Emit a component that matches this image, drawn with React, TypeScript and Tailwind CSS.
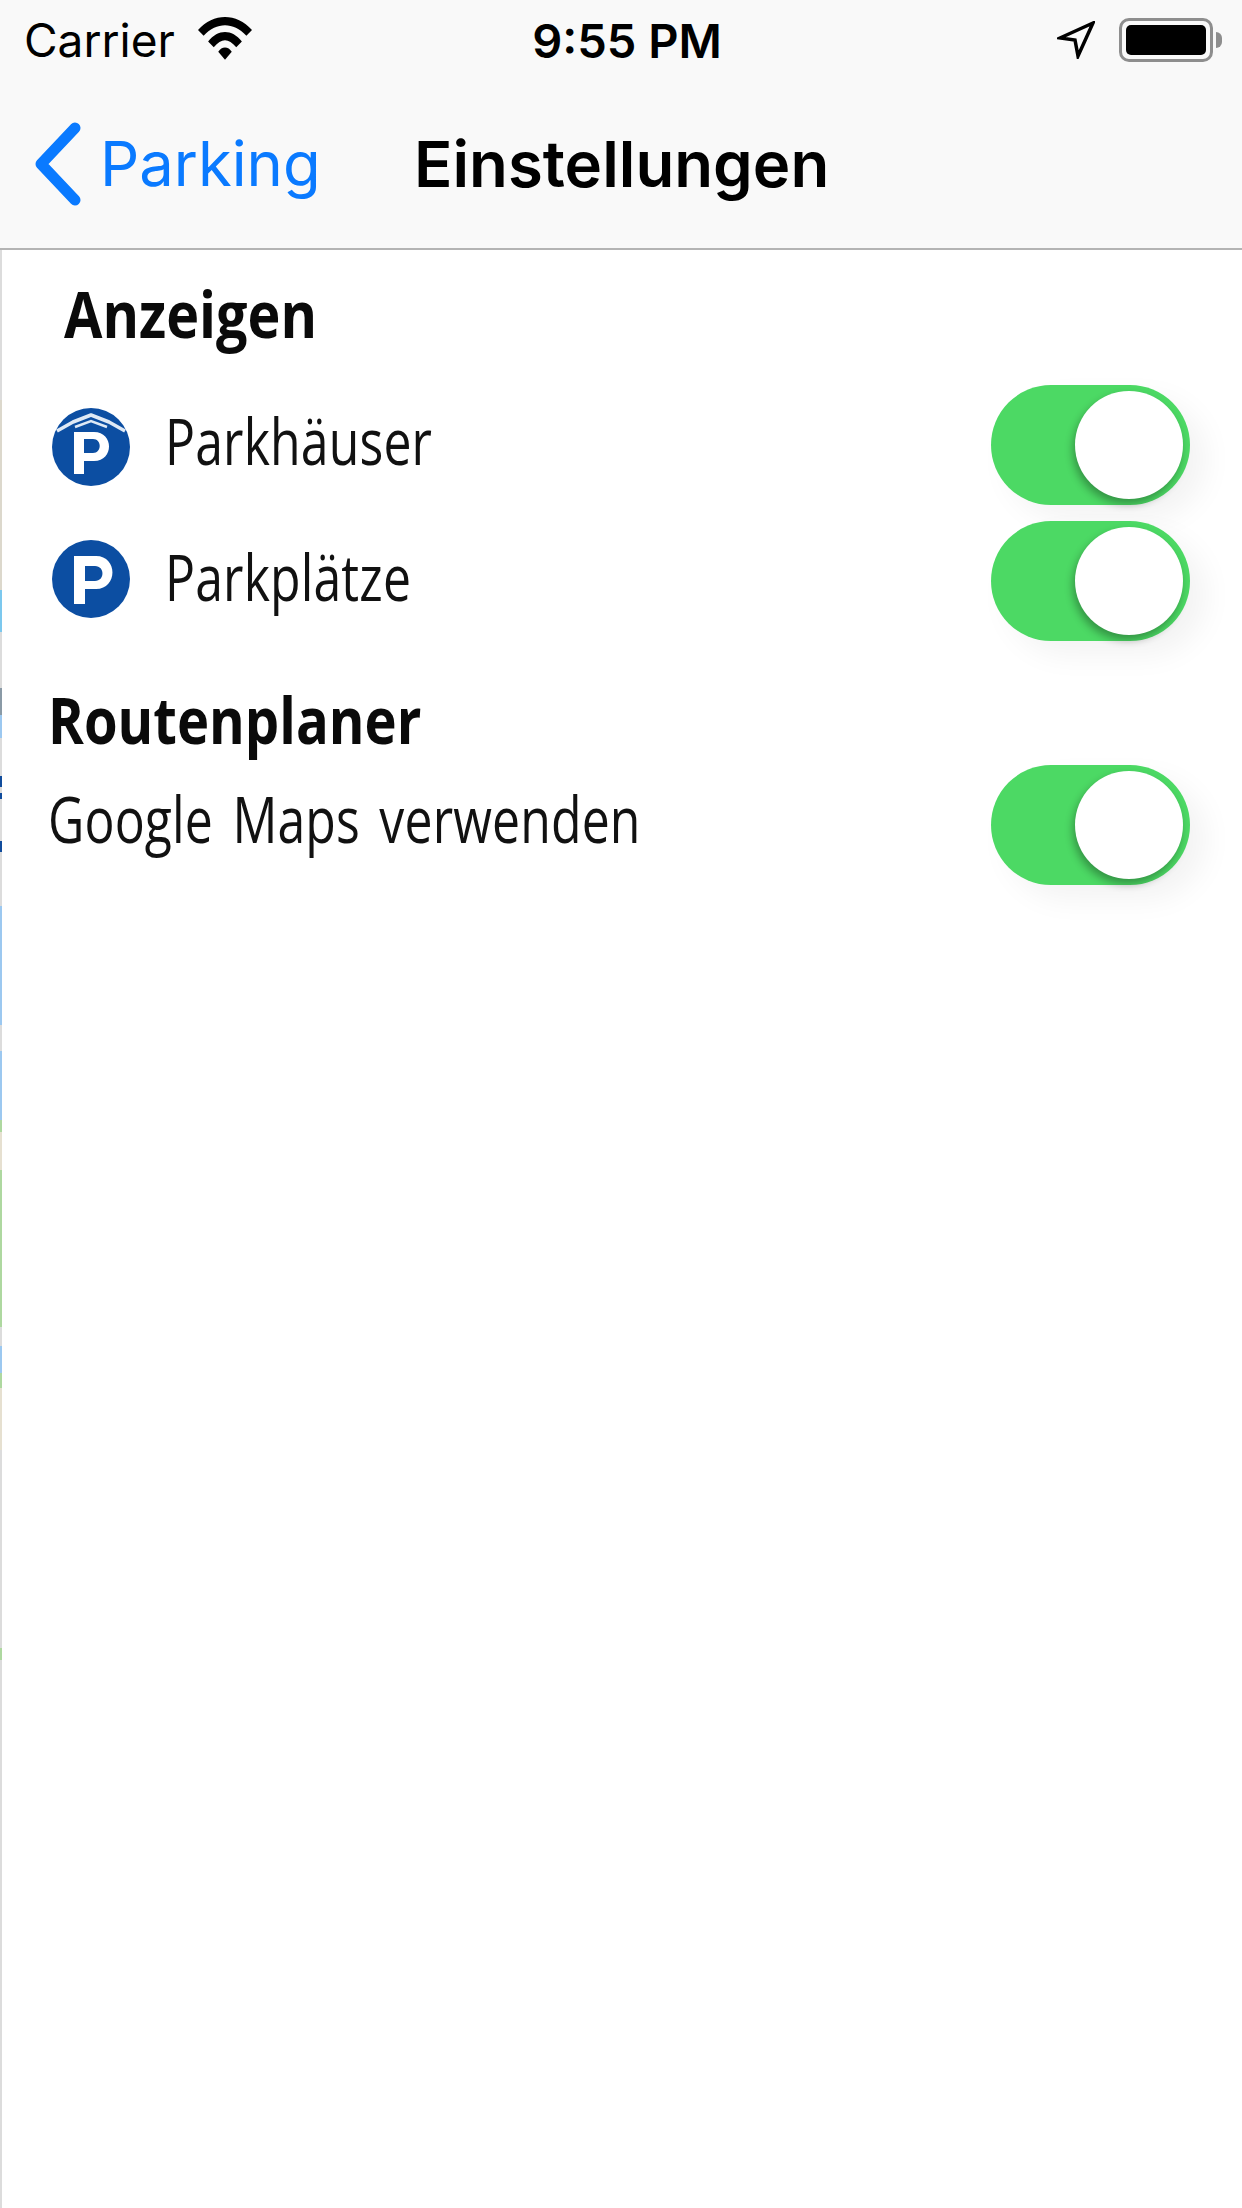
import React from 'react';

// thin map edge that shows through on the left of the page
const stripe: [number, string][] = [
  [150, '#dcdcdc'], [190, '#dcd8cc'], [42, '#7cc8ee'], [56, '#dcdcdc'], [27, '#8a9aa6'], [23, '#9cc8f0'],
  [38, '#dcdcdc'], [11, '#114c9c'], [6, '#dcdcdc'], [6, '#114c9c'], [42, '#dcdcdc'], [11, '#114c9c'],
  [54, '#dcdcdc'], [119, '#9cc8f0'], [26, '#dcdcdc'], [69, '#9cc8f0'], [12, '#aed8a0'], [38, '#e6e0d0'],
  [157, '#aed8a0'], [19, '#dcdcdc'], [27, '#9cc8f0'], [15, '#aed8a0'], [62, '#e6e0d0'], [198, '#dcdcdc'],
  [12, '#aed8a0'], [548, '#dcdcdc'],
];

const Toggle: React.FC = () => (
  <div className="relative w-[199px] h-[120px] shrink-0 rounded-full bg-[#4cd964] shadow-[16px_14px_30px_rgba(0,0,0,0.05)]">
    <div className="absolute left-[84px] top-[6px] w-[108px] h-[108px] rounded-full bg-white shadow-[-2px_5px_9px_rgba(0,0,0,0.32)]" />
  </div>
);

const ParkIcon: React.FC<{ roof?: boolean }> = ({ roof }) => (
  <svg width="80" height="80" viewBox="0 0 80 80" className={`ml-[3px] shrink-0 ${roof ? 'mt-[4px]' : 'mb-[4px]'}`}>
    <circle cx="40" cy="40" r="39" fill="#0c4ea2" />
    {roof ? (
      <>
        <path d="M6 24 L22 15 L40 8 L58 15 L74 24" fill="none" stroke="#dfe9f5" strokeWidth="3.5" strokeLinejoin="round" />
        <path d="M24 20 L40 14 L56 20" fill="none" stroke="#dfe9f5" strokeWidth="2.5" />
        <path
          fillRule="evenodd"
          d="M23 67 V25 H43 C63 25 63 54 43 54 H33 V67 Z M33 32 V46 H42 C51 46 51 32 42 32 Z"
          fill="#ffffff"
        />
      </>
    ) : (
      <path
        fillRule="evenodd"
        d="M23 65 V17 H45 C67 17 67 50 45 50 H34 V65 Z M34 27 V42 H44 C54 42 54 27 44 27 Z"
        fill="#ffffff"
      />
    )}
  </svg>
);

const BodyText: React.FC<{ children: React.ReactNode }> = ({ children }) => (
  <span className="inline-block origin-left scale-x-[0.78] whitespace-nowrap font-['Open_Sans',sans-serif] text-[64px] leading-[80px] tracking-[0.2px] [word-spacing:8px] text-[#111]">
    {children}
  </span>
);

const Heading: React.FC<{ children: React.ReactNode; wide?: boolean }> = ({ children, wide }) => (
  <span className={`inline-block origin-left ${wide ? 'scale-x-[0.87]' : 'scale-x-[0.85]'} whitespace-nowrap font-['Open_Sans',sans-serif] text-[64px] font-bold leading-[80px] text-[#0a0a0a]`}>
    {children}
  </span>
);

const App: React.FC = () => {
  return (
    <div className="relative w-[1242px] h-[2208px] overflow-hidden bg-white font-['Inter',sans-serif]">
      <div className="absolute left-0 top-[250px] flex w-[2px] flex-col">
        {stripe.map(([h, c], i) => (
          <div key={i} style={{ height: h, backgroundColor: c }} />
        ))}
      </div>

      <header className="h-[250px] border-b-2 border-[#b4b4b4] bg-[#f9f9f9]">
        <div className="flex h-[80px] items-center justify-between pl-[24px] pr-[20px]">
          <div className="flex w-[400px] items-center gap-[23px]">
            <span className="text-[46px] leading-none text-black">Carrier</span>
            <svg width="54" height="46" viewBox="0 0 48 40" preserveAspectRatio="none" className="-mt-[4px]">
              <path d="M0 13 C14 -2 34 -2 48 13 L43 18 C31 6 17 6 5 18 Z" fill="#000" />
              <path d="M9 23 C18 12 30 12 39 23 L34 28 C27 20 21 20 14 28 Z" fill="#000" />
              <path d="M18 32 C21 27 27 27 30 32 L24 39 Z" fill="#000" />
            </svg>
          </div>
          <span className="text-[47px] font-semibold leading-none text-black">9:55 PM</span>
          <div className="flex w-[392px] items-center justify-end gap-[24px]">
            <svg width="38" height="38" viewBox="0 0 38 38">
              <path d="M36 2 L3 17 L18 19 L21 35 Z" fill="none" stroke="#000" strokeWidth="3.5" strokeLinejoin="miter" />
            </svg>
            <div className="flex items-center gap-[3px]">
              <div className="h-[44px] w-[94px] rounded-[10px] border-[3px] border-[#8e8e8e] p-[4px]">
                <div className="h-full w-full rounded-[5px] bg-black" />
              </div>
              <div className="h-[16px] w-[6px] rounded-r-full bg-[#8e8e8e]" />
            </div>
          </div>
        </div>
        <div className="flex h-[168px] items-center pl-[33px]">
          <svg width="50" height="84" viewBox="0 0 50 84" className="shrink-0">
            <path d="M42 6 L8 42 L42 78" fill="none" stroke="#0a7aff" strokeWidth="11" strokeLinecap="round" strokeLinejoin="round" />
          </svg>
          <span className="ml-[17px] w-[314px] shrink-0 text-[61.5px] leading-none text-[#0a7aff]">Parking</span>
          <span className="text-[63.5px] font-semibold leading-none text-black">Einstellungen</span>
        </div>
      </header>

      <main className="pl-[48px] pr-[52px]">
        <div className="h-[64px] pl-[16px] pt-[24px]"><Heading wide>Anzeigen</Heading></div>

        <div className="mt-[71px] flex h-[120px] items-center">
          <ParkIcon roof />
          <div className="ml-[34px] mb-[8px] flex-1"><BodyText>Parkhäuser</BodyText></div>
          <Toggle />
        </div>
        <div className="mt-[16px] flex h-[120px] items-center">
          <ParkIcon />
          <div className="ml-[34px] mb-[8px] flex-1"><BodyText>Parkplätze</BodyText></div>
          <Toggle />
        </div>

        <div className="mt-[39px] h-[85px]"><Heading>Routenplaner</Heading></div>
        <div className="flex h-[120px] items-center">
          <div className="mb-[12px] flex-1"><BodyText>Google Maps verwenden</BodyText></div>
          <Toggle />
        </div>
      </main>
    </div>
  );
};

export default App;
